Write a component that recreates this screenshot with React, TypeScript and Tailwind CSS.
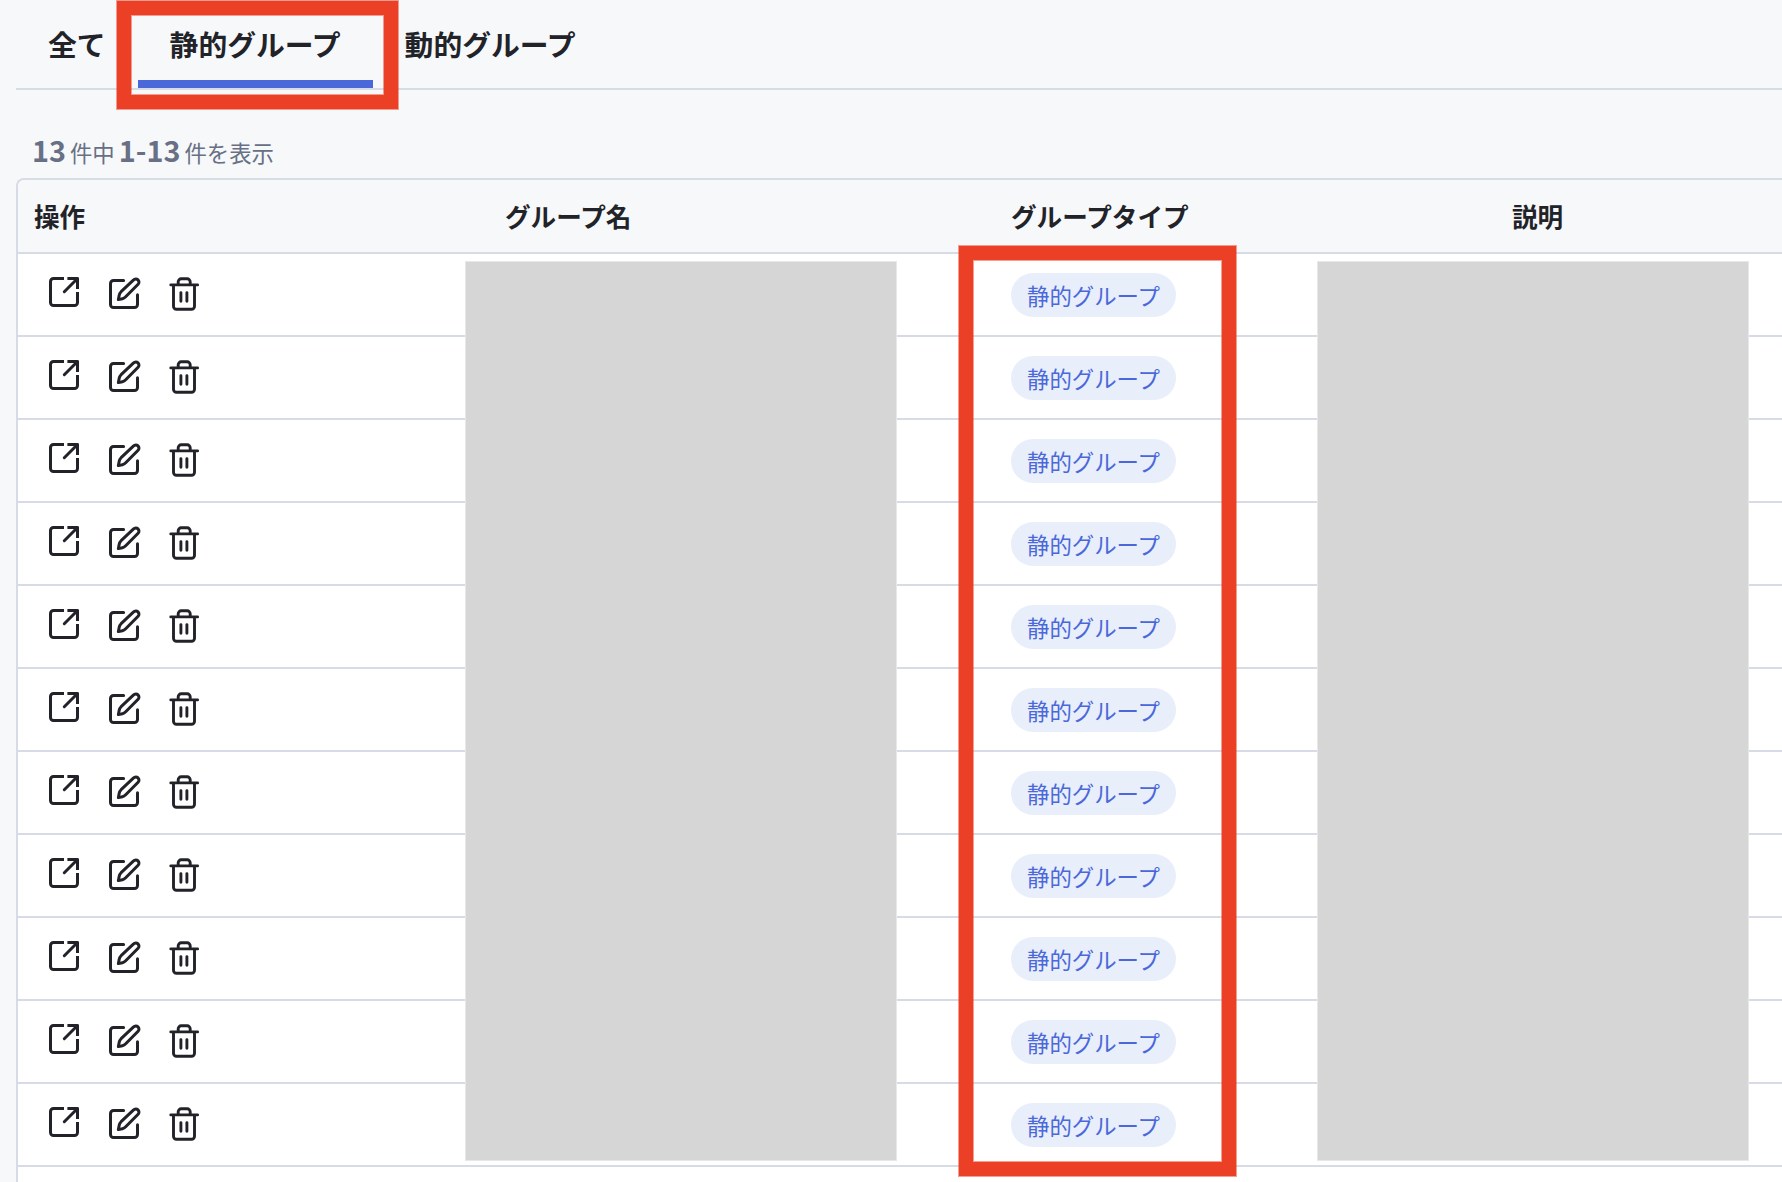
import React from 'react';

const tabs = [
  { label: '全て', active: false },
  { label: '静的グループ', active: true },
  { label: '動的グループ', active: false },
];

const rows = Array.from({ length: 11 }, (_, i) => ({ id: i + 1, type: '静的グループ' }));

const OpenIcon: React.FC = () => (
  <svg width="38" height="40" viewBox="0 0 38 40" fill="none" stroke="currentColor" strokeWidth="3" strokeLinejoin="round">
    <path d="M19 5.5H8.5a3 3 0 0 0-3 3v21a3 3 0 0 0 3 3h21a3 3 0 0 0 3-3v-10.5" />
    <path d="M22.4 5.5h10.1v10.4" />
    <path d="M31.5 6.5L19.3 18.7" strokeLinecap="round" />
    <path d="M27 4.5h6.5v6.5z" fill="currentColor" stroke="none" />
  </svg>
);

const EditIcon: React.FC = () => (
  <svg width="38" height="40" viewBox="0 0 38 40" fill="none" stroke="currentColor" strokeWidth="3" strokeLinejoin="round" strokeLinecap="round">
    <path d="M18.6 7.5H8.5a3 3 0 0 0-3 3v21a3 3 0 0 0 3 3h21a3 3 0 0 0 3-3v-9.8" />
    <path d="M13.4 26.6l.8-4.4c.3-1.6.9-2.5 1.9-3.5L28.6 6.9a3 3 0 0 1 4.5 4.3L20.7 23.8c-1 1-1.9 1.6-3.3 1.9z" />
  </svg>
);

const TrashIcon: React.FC = () => (
  <svg width="38" height="40" viewBox="0 0 38 40" fill="none" stroke="currentColor" strokeWidth="2.9" strokeLinejoin="round" strokeLinecap="round">
    <path d="M5.8 11.9h26.8" />
    <path d="M13.2 11.5V8.8a3 3 0 0 1 3-3h6a3 3 0 0 1 3 3v2.7" />
    <path d="M8.5 12.5v20.8a3 3 0 0 0 3 3h15a3 3 0 0 0 3-3v-20.8" />
    <path d="M15.9 19.6v8.7M21.9 19.6v8.7" />
  </svg>
);

const App: React.FC = () => {
  return (
    <div className="relative h-[1182px] w-[1782px] overflow-hidden bg-[#f7f8fa] pl-4 font-['Noto_Sans_CJK_JP',sans-serif] text-[#222329]">
      {/* Tabs */}
      <nav className="flex h-[90px] border-b-2 border-[#d6dbe5] text-[28.8px] font-bold leading-[88px]">
        {tabs.map((tab) => (
          <button
            key={tab.label}
            className={
              tab.active
                ? 'h-[88px] w-[235px] border-b-8 border-[#4a68d9] text-center'
                : 'h-[88px] px-8'
            }
          >
            {tab.label}
          </button>
        ))}
      </nav>

      {/* Result count */}
      <p className="flex h-[88px] items-baseline gap-1 pl-4 pt-[38px] text-[22.4px] leading-[44px] text-[#677084]">
        <b className="text-[28.8px]">13</b>
        <span>件中</span>
        <b className="text-[28.8px]">1-13</b>
        <span>件を表示</span>
      </p>

      {/* Group table */}
      <div className="h-[1100px] overflow-hidden rounded-tl-lg border-l-2 border-t-2 border-[#d6dbe5] bg-white">
        <div className="grid h-[74px] grid-cols-[471px_506px_501px_1fr] items-center border-b-2 border-[#d6dbe5] bg-[#f7f8fa] text-[25.6px] font-bold">
          <div className="pl-4">操作</div>
          <div className="pl-4">グループ名</div>
          <div className="pl-4">グループタイプ</div>
          <div className="pl-4">説明</div>
        </div>
        {rows.map((row) => (
          <div
            key={row.id}
            className="grid h-[83px] grid-cols-[471px_506px_501px_1fr] items-start border-b-2 border-[#d6dbe5] pt-[19px]"
          >
            <div className="flex gap-[22px] pl-[27px]">
              <OpenIcon />
              <EditIcon />
              <TrashIcon />
            </div>
            <div />
            <div className="pl-4">
              <span className="flex h-11 w-[165px] items-center justify-center rounded-full bg-[#e8eefa] pt-0.5 text-[22.4px] text-[#4a68d9]">
                {row.type}
              </span>
            </div>
            <div />
          </div>
        ))}
      </div>

      {/* Masked columns */}
      <div className="absolute left-[465px] top-[261px] h-[900px] w-[432px] border border-[#e8e8e8] bg-[#d6d6d6]" />
      <div className="absolute left-[1317px] top-[261px] h-[900px] w-[432px] border border-[#e8e8e8] bg-[#d6d6d6]" />

      {/* Highlight frames */}
      <div className="absolute left-[117px] top-px h-[108px] w-[281px] border-[14px] border-[#eb3f26] shadow-[0_0_0_1px_rgba(235,63,38,0.5),inset_0_0_0_1px_rgba(235,63,38,0.5)]" />
      <div className="absolute left-[959px] top-[246px] h-[930px] w-[277px] border-[14px] border-[#eb3f26] shadow-[0_0_0_1px_rgba(235,63,38,0.5),inset_0_0_0_1px_rgba(235,63,38,0.5)]" />
    </div>
  );
};

export default App;
